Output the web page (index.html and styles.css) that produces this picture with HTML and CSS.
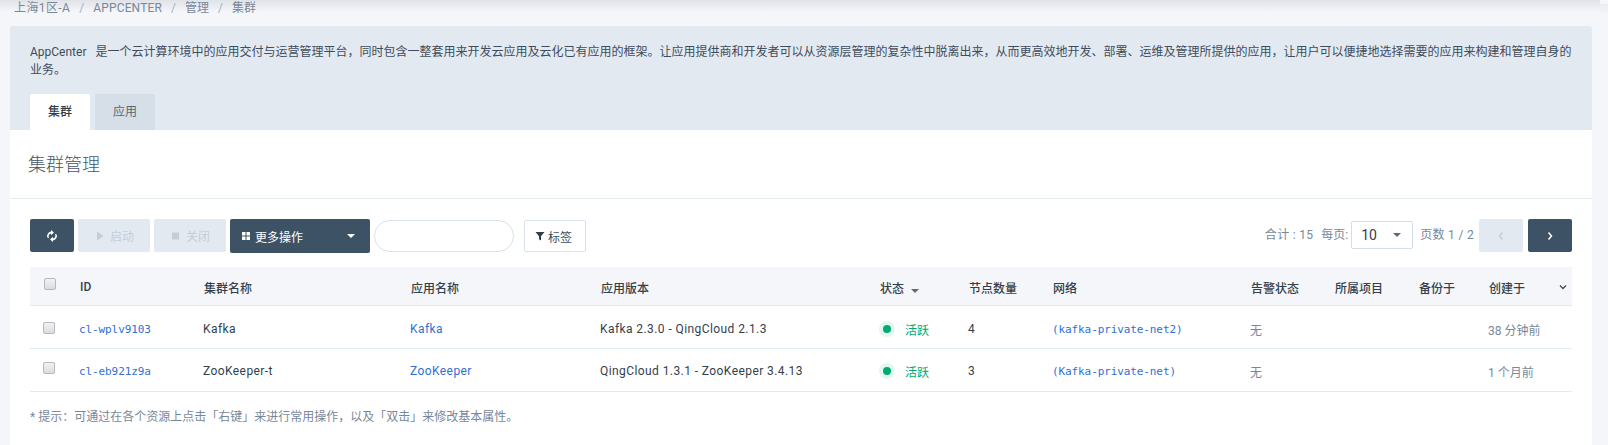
FILE: index.html
```html
<!DOCTYPE html>
<html lang="zh-CN">
<head>
  <meta charset="UTF-8" />
  <title>集群管理</title>
  <link rel="stylesheet" href="styles.css">
</head>
<body>
  <div class="topbar"></div>
  <div class="topbar-end"></div>

  <div class="crumbs">
    <span class="crumb-first">上海1区-A</span><i>/</i><span class="crumb-app">APPCENTER</span><i>/</i><span>管理</span><i>/</i><span>集群</span>
  </div>

  <div class="panel">
    <div class="intro">
      <p>AppCenter 是一个云计算环境中的应用交付与运营管理平台，同时包含一整套用来开发云应用及云化已有应用的框架。让应用提供商和开发者可以从资源层管理的复杂性中脱离出来，从而更高效地开发、部署、运维及管理所提供的应用，让用户可以便捷地选择需要的应用来构建和管理自身的业务。</p>
      <div class="tabs">
        <a class="tab active">集群</a>
        <a class="tab">应用</a>
      </div>
    </div>

    <h1 class="title">集群管理</h1>

    <div class="content">
      <div class="toolbar">
        <button class="btn btn-dark btn-icon">
          <svg width="12" height="12" viewBox="0 0 12 12" fill="#fff"><path d="M1.300 7.500a4.700 4.700 0 0 1 3.700-6V0l3 2.600-3 2.600V3.500a2.900 2.900 0 0 0-1.700 4.700z"/><path d="M10.700 4.500a4.700 4.700 0 0 1-3.700 6V12L4 9.400l3-2.600v1.700a2.900 2.900 0 0 0 1.700-4.700z"/></svg>
        </button>
        <button class="btn btn-off">
          <svg width="8" height="10" viewBox="0 0 8 10"><path d="M1 0.500l6.500 4.500L1 9.500z" fill="#c3ced9"/></svg>
          启动
        </button>
        <button class="btn btn-off">
          <svg width="8" height="10" viewBox="0 0 8 10"><rect y="1.500" width="7" height="7" fill="#c3ced9"/></svg>
          关闭
        </button>
        <button class="btn btn-dark btn-more">
          <svg width="8" height="8" viewBox="0 0 8 8" fill="#fff"><rect width="3.500" height="3.500"/><rect x="4.500" width="3.500" height="3.500"/><rect y="4.500" width="3.500" height="3.500"/><rect x="4.500" y="4.500" width="3.500" height="3.500"/></svg>
          <span class="more-label">更多操作</span>
          <span class="caret caret-white"></span>
        </button>
        <input class="search" type="text">
        <button class="btn btn-tag">
          <svg width="10" height="10" viewBox="0 0 10 10"><path d="M0.500 1h9L6 5.300V9.500L4 8.300V5.300z" fill="#2f3d4d"/></svg>
          标签
        </button>

        <div class="pager">
          <span class="total">合计 : 15</span>
          <span class="per">每页:</span>
          <div class="select"><span>10</span><span class="caret"></span></div>
          <span class="pages">页数 1 / 2</span>
          <button class="btn btn-off btn-page">
            <svg width="6" height="10" viewBox="0 0 6 10"><path d="M4.500 1.500L1.500 5l3 3.500" fill="none" stroke="#c3ced9" stroke-width="1.500"/></svg>
          </button>
          <button class="btn btn-dark btn-page">
            <svg width="6" height="10" viewBox="0 0 6 10"><path d="M1.500 1.500L4.500 5l-3 3.500" fill="none" stroke="#fff" stroke-width="1.500"/></svg>
          </button>
        </div>
      </div>

      <table class="list">
        <colgroup>
          <col class="c-check"><col class="c-id"><col class="c-name"><col class="c-app"><col class="c-ver">
          <col class="c-status"><col class="c-nodes"><col class="c-net"><col class="c-alarm"><col class="c-proj">
          <col class="c-backup"><col class="c-created">
        </colgroup>
        <thead>
          <tr>
            <th><span class="check check-head"></span></th>
            <th>ID</th>
            <th>集群名称</th>
            <th>应用名称</th>
            <th>应用版本</th>
            <th class="th-status">状态<span class="caret caret-sort"></span></th>
            <th>节点数量</th>
            <th>网络</th>
            <th>告警状态</th>
            <th>所属项目</th>
            <th>备份于</th>
            <th>
              <div class="th-last">创建于
                <svg width="8" height="6" viewBox="0 0 8 6"><path d="M1 1.500l3 3 3-3" fill="none" stroke="#3b4a5c" stroke-width="1.300"/></svg>
              </div>
            </th>
          </tr>
        </thead>
        <tbody>
          <tr>
            <td><span class="check"></span></td>
            <td><a class="mono">cl-wplv9103</a></td>
            <td class="latin">Kafka</td>
            <td class="latin"><a class="link">Kafka</a></td>
            <td class="latin">Kafka 2.3.0 - QingCloud 2.1.3</td>
            <td><span class="status"><span class="dot"></span>活跃</span></td>
            <td>4</td>
            <td><a class="mono">(kafka-private-net2)</a></td>
            <td class="muted">无</td>
            <td></td>
            <td></td>
            <td class="muted">38 分钟前</td>
          </tr>
          <tr>
            <td><span class="check"></span></td>
            <td><a class="mono">cl-eb921z9a</a></td>
            <td class="latin">ZooKeeper-t</td>
            <td class="latin"><a class="link">ZooKeeper</a></td>
            <td class="latin">QingCloud 1.3.1 - ZooKeeper 3.4.13</td>
            <td><span class="status"><span class="dot"></span>活跃</span></td>
            <td>3</td>
            <td><a class="mono">(Kafka-private-net)</a></td>
            <td class="muted">无</td>
            <td></td>
            <td></td>
            <td class="muted">1 个月前</td>
          </tr>
        </tbody>
      </table>

      <p class="hint">* 提示：可通过在各个资源上点击「右键」来进行常用操作，以及「双击」来修改基本属性。</p>
    </div>
  </div>
</body>
</html>
```

FILE: styles.css
```css
html, body {
  height: 100%;
}

body {
  margin: 0;
  overflow: hidden;
  background: #f4f6fa;
  color: #333f4d;
  font-family: Roboto, "Noto Sans CJK SC", sans-serif;
  font-size: 12px;
}

/* shadow of the header that is scrolled away */
.topbar {
  position: absolute;
  top: 0;
  left: 0;
  width: 1600px;
  height: 12px;
  background: linear-gradient(#dfe2e7, #f4f6fa);
}

.topbar-end {
  position: absolute;
  top: 4px;
  right: 0;
  width: 8px;
  height: 12px;
  background: linear-gradient(#e9ecf0, #f4f6fa);
}

.crumbs {
  position: relative;
  height: 25px;
  padding: 1px 0 0 14px;
  display: flex;
  align-items: flex-start;
  line-height: 14px;
  color: #78889a;
}

.crumbs i {
  font-style: normal;
  margin: 0 9px;
  color: #a3b2c2;
}

.crumb-first {
  letter-spacing: 0.4px;
}

.crumb-app {
  letter-spacing: 0.15px;
}

.panel {
  width: 1582px;
  margin-left: 10px;
  height: 419px;
  background: #fff;
}

.intro {
  background: #e3e9f0;
  padding: 17px 20px 0;
  height: 87px;
  border-radius: 2px 2px 0 0;
}

.intro p {
  margin: 0;
  line-height: 18px;
  color: #3e4c5c;
  word-spacing: 6px;
}

.tabs {
  display: flex;
  gap: 5px;
  margin-top: 15px;
}

.tab {
  width: 60px;
  height: 36px;
  line-height: 36px;
  text-align: center;
  background: #d6dfe8;
  color: #556577;
  border-radius: 2px 2px 0 0;
}

.tab.active {
  background: #fff;
  color: #2f3d4d;
  font-weight: 500;
}

.title {
  margin: 0;
  height: 69px;
  box-sizing: border-box;
  padding: 23px 0 0 18px;
  font-size: 18px;
  line-height: 24px;
  font-weight: 300;
  color: #475666;
  border-bottom: 1px solid #e4ebee;
}

.content {
  padding: 20px 20px 0;
}

.toolbar {
  display: flex;
  align-items: flex-start;
  height: 48px;
}

.btn {
  height: 33px;
  border: none;
  border-radius: 2px;
  padding: 0;
  font: inherit;
  display: flex;
  align-items: center;
  justify-content: center;
  gap: 5px;
}

.btn-dark {
  background: #3e5265;
  color: #fff;
}

.btn-off {
  width: 72px;
  margin-left: 4px;
  padding-left: 2px;
  gap: 6px;
  background: #e3e9f0;
  color: #c3ced9;
}

.btn-icon {
  width: 44px;
}

.btn-more {
  width: 140px;
  margin-left: 4px;
  padding: 0 12px;
  height: 34px;
  justify-content: flex-start;
  gap: 5px;
}

.more-label {
  flex: 1;
  text-align: left;
}

.caret {
  width: 0;
  height: 0;
  border-left: 4px solid transparent;
  border-right: 4px solid transparent;
  border-top: 4px solid #5a6a7c;
}

.caret-white {
  border-top-color: #fff;
  margin-right: 3px;
}

.caret-sort {
  display: inline-block;
  margin-left: 7px;
  vertical-align: 0;
}

.search {
  width: 140px;
  height: 32px;
  margin: 1px 0 0 4px;
  box-sizing: border-box;
  border: 1px solid #d9e2ec;
  border-radius: 16px;
  background: #fff;
  padding: 0 12px;
  outline: none;
}

.btn-tag {
  width: 62px;
  height: 32px;
  margin: 1px 0 0 10px;
  padding-right: 3px;
  box-sizing: border-box;
  background: #fff;
  border: 1px solid #d9e2ec;
  color: #3e4c5c;
  gap: 3px;
}

.pager {
  margin-left: auto;
  display: flex;
  align-items: flex-start;
  line-height: 33px;
  color: #78889a;
}

.total {
  letter-spacing: 0.3px;
}

.per {
  margin-left: 8px;
}

.select {
  width: 62px;
  height: 28px;
  margin: 2px 0 0 3px;
  box-sizing: border-box;
  border: 1px solid #d3ddea;
  border-radius: 2px;
  padding: 0 11px 0 9px;
  display: flex;
  align-items: center;
  justify-content: space-between;
  color: #2f3d4d;
  font-size: 14px;
}

.pages {
  margin-left: 7px;
  letter-spacing: 0.3px;
}

.btn-page {
  width: 44px;
  margin-left: 5px;
  padding: 0;
}

.list {
  width: 1542px;
  table-layout: fixed;
  border-collapse: collapse;
}

.c-check { width: 50px; }
.c-id { width: 124px; }
.c-name { width: 207px; }
.c-app { width: 190px; }
.c-ver { width: 279px; }
.c-status { width: 89px; }
.c-nodes { width: 84px; }
.c-net { width: 198px; }
.c-alarm { width: 84px; }
.c-proj { width: 84px; }
.c-backup { width: 70px; }
.c-created { width: 83px; }

.list th {
  height: 36px;
  padding: 2px 0 0;
  background: #f4f6fa;
  border-bottom: 1px solid #e3e9f0;
  text-align: left;
  font-weight: 500;
  color: #333f4d;
}

.list td {
  height: 40px;
  padding: 2px 0 0;
  text-indent: -1px;
  border-bottom: 1px solid #e3e9f0;
}

.list tbody tr:first-child td {
  height: 38px;
  padding-top: 4px;
}

.list .latin {
  letter-spacing: 0.42px;
}

.th-last {
  display: flex;
  align-items: center;
  justify-content: space-between;
  padding-right: 5px;
}

.check {
  display: block;
  width: 10px;
  height: 10px;
  margin: -6px 0 0 13px;
  border: 1px solid #b4b9bf;
  border-radius: 2px;
  background: linear-gradient(#f2f2f2, #dcdcdc);
}

.list tbody tr:first-child .check {
  margin-top: -2px;
}

.check-head {
  margin: -6px 0 0 14px;
}

.mono {
  font-family: "DejaVu Sans Mono", monospace;
  font-size: 11px;
  letter-spacing: -0.1px;
  color: #2f6fd6;
}

.link {
  color: #2f6fd6;
}

.muted {
  color: #78889a;
}

.status {
  display: flex;
  align-items: center;
  color: #00aa72;
  text-indent: 0;
}

.dot {
  width: 8px;
  height: 8px;
  margin: 0 14px 0 3px;
  border-radius: 50%;
  background: #00aa72;
  box-shadow: 0 0 0 4px #e3f6ef;
}

.hint {
  margin: 17px 0 0;
  line-height: 16px;
  color: #78889a;
}
```
